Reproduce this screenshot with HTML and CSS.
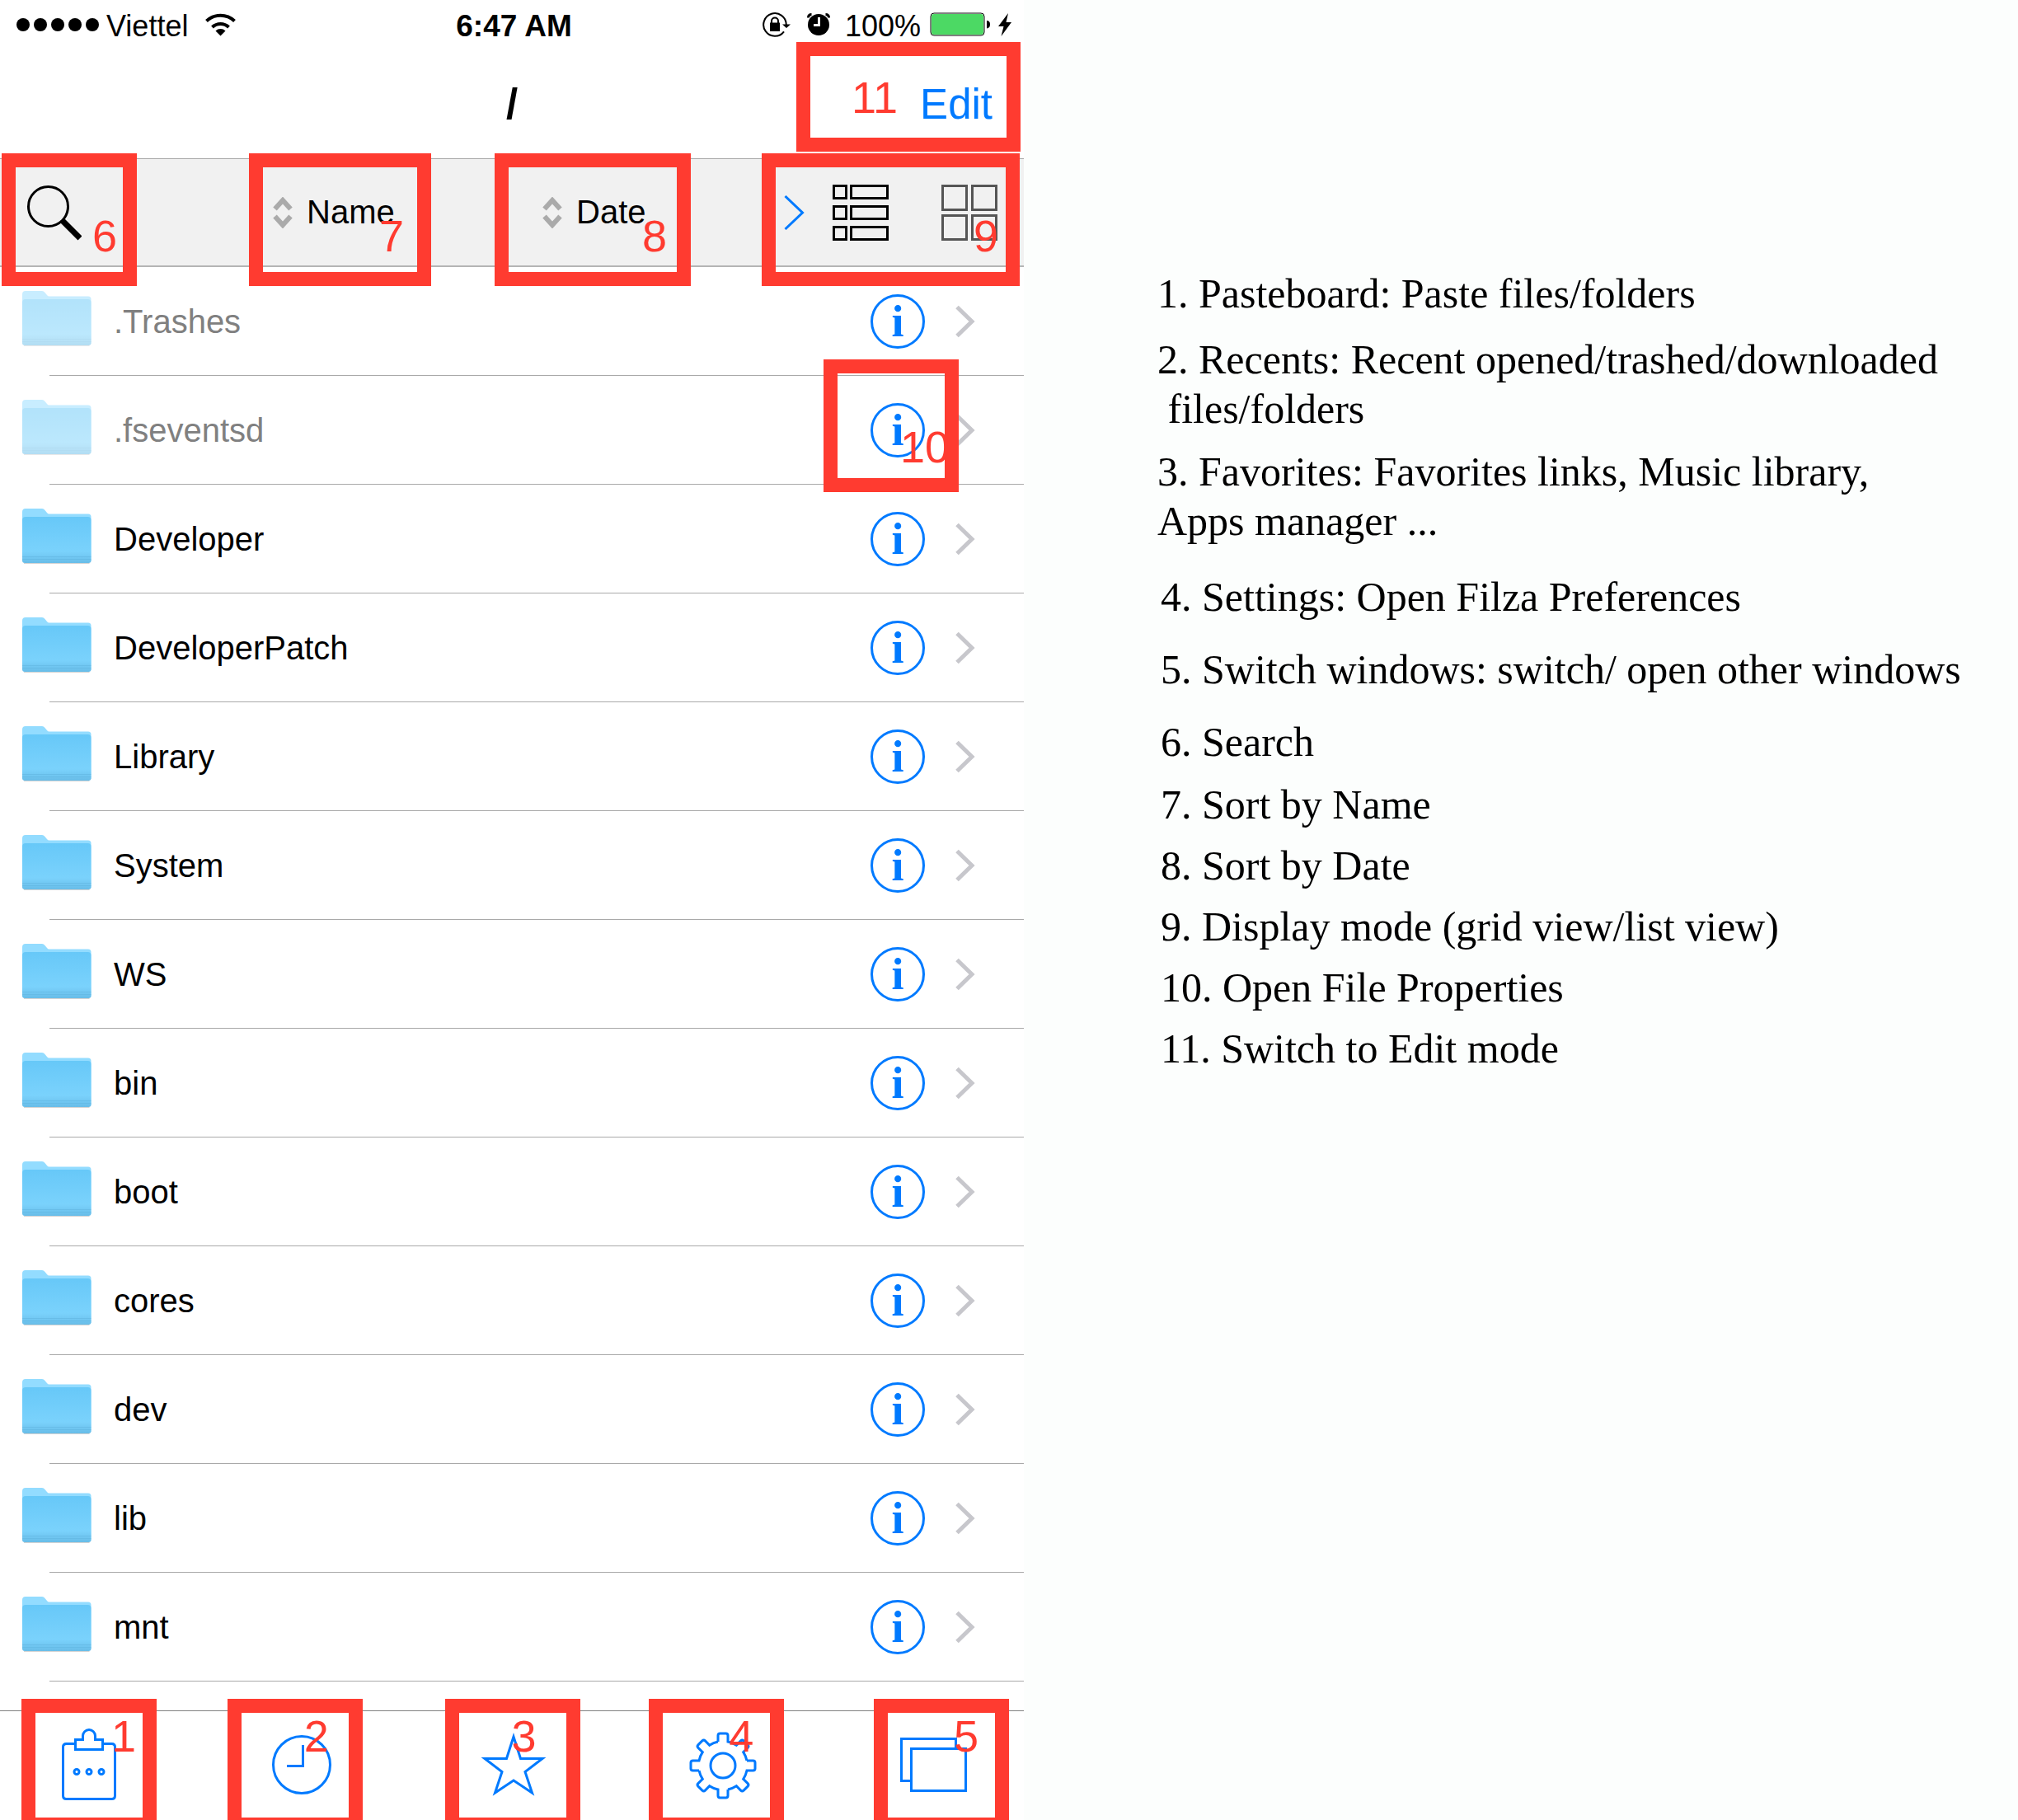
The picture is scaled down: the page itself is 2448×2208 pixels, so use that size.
FILE: index.html
```html
<!DOCTYPE html>
<html lang="en">
<head>
  <meta charset="UTF-8">
  <title>Filza - Guide</title>
  <meta name="viewport" content="width=device-width, initial-scale=1.0">
  <link rel="stylesheet" href="styles.css">
</head>
<body>
  <svg class="defs" aria-hidden="true">
    <defs>
      <linearGradient id="folder-fill" x1="0" y1="0" x2="0" y2="1">
        <stop offset="0" stop-color="#67c8f8"/>
        <stop offset="0.75" stop-color="#7ad2fc"/>
        <stop offset="1" stop-color="#68bde8"/>
      </linearGradient>
      <symbol id="folder" viewBox="0 0 84 74">
        <path d="M0 64V4q0-4 4-4h20q2 0 3.500 2l2.500 3q1 1.500 3 1.500h47q3.500 0 3.500 3.500v54z" fill="#93dcff"/>
        <path d="M0 14q0-4 4-4h75.500q4 0 4 4v49q0 3-3 3H3q-3 0-3-3z" fill="url(#folder-fill)"/>
        <path d="M0 58.500h83.500M0 61.500h83.500" stroke="#5fb4df" opacity="0.500"/>
        <path d="M2 66.500h79.500" stroke="#b5b5b5" opacity="0.600"/>
      </symbol>
      <symbol id="chevron" viewBox="0 0 26 40">
        <path d="M3 2.500 21 20 3 37.500" fill="none" stroke="#c7c7cc" stroke-width="5"/>
      </symbol>
      <symbol id="sort" viewBox="0 0 24 38">
        <path d="M2.500 14.500 12 4l9.500 10.500M2.500 23.500 12 34l9.500-10.500" fill="none" stroke="#aaa" stroke-width="6"/>
      </symbol>
      <path id="gear-quarter" d="M-6-29v-7.500q0-2.500 2.500-2.500h7q2.500 0 2.500 2.500V-29A30 30 0 0 1 16.300-24.700L21.600-30.100Q23.300-31.800 25.100-30.100L30.100-25.100Q31.800-23.300 30.100-21.600L24.700-16.300A30 30 0 0 1 29-6"/>
    </defs>
  </svg>

  <main class="page">
    <section class="phone">
      <div class="status">
        <div class="status-left">
          <svg width="100" height="18" viewBox="0 0 100 18">
            <circle cx="8" cy="9" r="8"/><circle cx="29" cy="9" r="8"/><circle cx="50" cy="9" r="8"/><circle cx="71" cy="9" r="8"/><circle cx="92" cy="9" r="8"/>
          </svg>
          <span class="carrier">Viettel</span>
          <svg width="38" height="28" viewBox="0 0 38 28">
            <path d="M1.500 9.500A24.700 24.700 0 0 1 35.500 9.500M8.500 17A14.500 14.500 0 0 1 28.500 17" fill="none" stroke="#000" stroke-width="4"/>
            <path d="M12.500 21.500a8.500 8.500 0 0 1 12 0l-6 6z"/>
          </svg>
        </div>
        <span class="time">6:47 AM</span>
        <div class="status-right">
          <svg class="lock" width="34" height="30" viewBox="0 0 34 30">
            <path d="M28.800 15A13.800 13.800 0 1 0 26 23.300" fill="none" stroke="#000" stroke-width="2"/>
            <path d="M24 14.500h10l-5 4.500zM9 12.500h12v10.500H9z"/>
            <path d="M11 13V10.500a4 4 0 0 1 8 0V13" fill="none" stroke="#000" stroke-width="2"/>
          </svg>
          <svg class="alarm" width="28" height="28" viewBox="0 0 28 28">
            <circle cx="14" cy="14" r="13"/>
            <path d="M1.500 5.500Q1.500 1.500 5.500 1.500M26.500 5.500Q26.500 1.500 22.500 1.500" fill="none" stroke="#000" stroke-width="3"/>
            <path d="M14.500 5v9.500H8" fill="none" stroke="#fff" stroke-width="3"/>
          </svg>
          <span class="percent">100%</span>
          <svg width="73" height="30" viewBox="0 0 73 30">
            <rect x="1" y="1" width="65" height="27" rx="4" fill="#fff" stroke="#000"/>
            <rect x="2" y="2" width="63" height="25" rx="3" fill="#4cd964"/>
            <path d="M69 10q4 0 4 4.500T69 19.500z"/>
          </svg>
          <svg class="bolt" width="16" height="28" viewBox="0 0 16 28">
            <path d="M12 0 0 16h6.500L3.500 28 16 11H9.500z"/>
          </svg>
        </div>
      </div>

      <header class="nav">
        <h1>/</h1>
        <button class="edit" type="button">Edit</button>
        <span class="mark mark-11">11</span>
      </header>

      <div class="toolbar">
        <div class="tool tool-search">
          <button type="button" aria-label="Search">
            <svg width="66" height="68" viewBox="0 0 66 68">
              <circle cx="25.500" cy="26.500" r="24" fill="none" stroke="#000" stroke-width="3"/>
              <path d="M42 43 64 65" stroke="#000" stroke-width="7"/>
            </svg>
          </button>
          <span class="mark mark-6">6</span>
        </div>
        <div class="tool">
          <button class="sort" type="button"><svg width="24" height="38"><use href="#sort"/></svg>Name</button>
          <span class="mark mark-7">7</span>
        </div>
        <div class="tool">
          <button class="sort" type="button"><svg width="24" height="38"><use href="#sort"/></svg>Date</button>
          <span class="mark mark-8">8</span>
        </div>
        <div class="tool tool-views">
          <svg width="25" height="42" viewBox="0 0 25 42">
            <path d="M1.500 1 22.500 21 1.500 41" fill="none" stroke="#007aff" stroke-width="3"/>
          </svg>
          <button class="view-list" type="button" aria-label="List view">
            <svg width="68" height="68" viewBox="0 0 68 68" fill="none" stroke="#000" stroke-width="3">
              <path d="M1.500 1.500h15v15h-15zM22.500 1.500h44v15h-44zM1.500 26.500h15v15h-15zM22.500 26.500h44v15h-44zM1.500 51.500h15v15h-15zM22.500 51.500h44v15h-44z"/>
            </svg>
          </button>
          <button class="view-grid" type="button" aria-label="Grid view">
            <svg width="68" height="68" viewBox="0 0 68 68" fill="none" stroke="#555" stroke-width="3">
              <path d="M1.500 1.500h29v29h-29zM37.500 1.500h29v29h-29zM1.500 37.500h29v29h-29zM37.500 37.500h29v29h-29z"/>
            </svg>
          </button>
          <span class="mark mark-9">9</span>
        </div>
      </div>

      <ul class="files">
        <li class="hidden-file"><svg class="folder"><use href="#folder"/></svg><span>.Trashes</span><button class="info" type="button">i</button><svg class="chevron"><use href="#chevron"/></svg></li>
        <li class="hidden-file"><svg class="folder"><use href="#folder"/></svg><span>.fseventsd</span><button class="info" type="button">i</button><svg class="chevron"><use href="#chevron"/></svg><span class="mark mark-10">10</span></li>
        <li><svg class="folder"><use href="#folder"/></svg><span>Developer</span><button class="info" type="button">i</button><svg class="chevron"><use href="#chevron"/></svg></li>
        <li><svg class="folder"><use href="#folder"/></svg><span>DeveloperPatch</span><button class="info" type="button">i</button><svg class="chevron"><use href="#chevron"/></svg></li>
        <li><svg class="folder"><use href="#folder"/></svg><span>Library</span><button class="info" type="button">i</button><svg class="chevron"><use href="#chevron"/></svg></li>
        <li><svg class="folder"><use href="#folder"/></svg><span>System</span><button class="info" type="button">i</button><svg class="chevron"><use href="#chevron"/></svg></li>
        <li><svg class="folder"><use href="#folder"/></svg><span>WS</span><button class="info" type="button">i</button><svg class="chevron"><use href="#chevron"/></svg></li>
        <li><svg class="folder"><use href="#folder"/></svg><span>bin</span><button class="info" type="button">i</button><svg class="chevron"><use href="#chevron"/></svg></li>
        <li><svg class="folder"><use href="#folder"/></svg><span>boot</span><button class="info" type="button">i</button><svg class="chevron"><use href="#chevron"/></svg></li>
        <li><svg class="folder"><use href="#folder"/></svg><span>cores</span><button class="info" type="button">i</button><svg class="chevron"><use href="#chevron"/></svg></li>
        <li><svg class="folder"><use href="#folder"/></svg><span>dev</span><button class="info" type="button">i</button><svg class="chevron"><use href="#chevron"/></svg></li>
        <li><svg class="folder"><use href="#folder"/></svg><span>lib</span><button class="info" type="button">i</button><svg class="chevron"><use href="#chevron"/></svg></li>
        <li><svg class="folder"><use href="#folder"/></svg><span>mnt</span><button class="info" type="button">i</button><svg class="chevron"><use href="#chevron"/></svg></li>
      </ul>

      <nav class="tabs">
        <div class="tab">
          <button type="button" aria-label="Pasteboard">
            <svg viewBox="0 0 84 90">
              <path d="M23.500 18.500H12.500q-4 0-4 4v59q0 4 4 4h55q4 0 4-4v-59q0-4-4-4H56.500"/>
              <path d="M23.500 13.500h9V9a7.500 7.500 0 0 1 15 0v4.500h9v12h-33z"/>
              <circle cx="25" cy="52.500" r="3"/><circle cx="40" cy="52.500" r="3"/><circle cx="55" cy="52.500" r="3"/>
            </svg>
          </button>
          <span class="mark mark-1">1</span>
        </div>
        <div class="tab">
          <button type="button" aria-label="Recents">
            <svg viewBox="0 0 84 90">
              <circle cx="42" cy="44" r="34.500"/>
              <path d="M43.500 20v25.500H24"/>
            </svg>
          </button>
          <span class="mark mark-2">2</span>
        </div>
        <div class="tab">
          <button type="button" aria-label="Favorites">
            <svg viewBox="0 0 84 90">
              <path stroke-miterlimit="10" d="M43 10 51.500 36.500H78L57 52.500 65.500 78 43 63 20.500 78 29 52.500 8 36.500H34.500z"/>
            </svg>
          </button>
          <span class="mark mark-3">3</span>
        </div>
        <div class="tab">
          <button type="button" aria-label="Settings">
            <svg viewBox="0 0 84 90">
              <g transform="translate(42 45)">
                <use href="#gear-quarter"/>
                <use href="#gear-quarter" transform="rotate(90)"/>
                <use href="#gear-quarter" transform="rotate(180)"/>
                <use href="#gear-quarter" transform="rotate(270)"/>
                <circle r="15"/>
              </g>
            </svg>
          </button>
          <span class="mark mark-4">4</span>
        </div>
        <div class="tab">
          <button type="button" aria-label="Switch windows">
            <svg viewBox="0 0 84 90">
              <path d="M13 63.500H2.500v-51h66V24M14.500 24.500h66v51h-66z"/>
            </svg>
          </button>
          <span class="mark mark-5">5</span>
        </div>
      </nav>
    </section>

    <section class="legend">
      <ol>
        <li>1. Pasteboard: Paste files/folders</li>
        <li class="gap-m">2. Recents: Recent opened/trashed/downloaded<br>&nbsp;files/folders</li>
        <li class="gap-s">3. Favorites: Favorites links, Music library,<br>Apps manager ...</li>
      </ol>
      <ol class="legend-more">
        <li>4. Settings: Open Filza Preferences</li>
        <li class="gap-l">5. Switch windows: switch/ open other windows</li>
        <li class="gap-l">6. Search</li>
        <li class="gap-s">7. Sort by Name</li>
        <li>8. Sort by Date</li>
        <li>9. Display mode (grid view/list view)</li>
        <li>10. Open File Properties</li>
        <li>11. Switch to Edit mode</li>
      </ol>
    </section>
  </main>
</body>
</html>
```
FILE: styles.css
```css
* { box-sizing: border-box; }
body { margin: 0; background: #fcfefd; color: #000; font-family: "Liberation Sans", Arial, sans-serif; }
h1, ul, ol { margin: 0; padding: 0; list-style: none; }
svg { display: block; flex: none; }
button { display: block; margin: 0; padding: 0; border: 0; background: none; color: inherit; font: inherit; cursor: pointer; }
.defs { position: absolute; width: 0; height: 0; }

.page { display: grid; grid-template-columns: 207fr 201fr; min-height: 100vh; }
.phone { display: flex; flex-direction: column; overflow: hidden; background: #fff; }

/* status bar */
.status { display: grid; grid-template-columns: 1fr auto 1fr; align-items: center; height: 60px; padding: 0 15px 0 20px; font-size: 36px; line-height: 56px; }
.status-left, .status-right { display: flex; align-items: center; }
.status-right { justify-content: flex-end; }
.carrier, .time, .percent { padding-top: 3px; }
.carrier { margin: 0 21px 0 9px; }
.time { font-size: 37px; font-weight: bold; }
.alarm { margin: 0 18px 0 20px; }
.percent { margin-right: 11px; }
.bolt { margin-left: 10px; }

/* title bar */
.nav { position: relative; display: grid; grid-template-columns: 1fr auto 1fr; align-items: center; height: 132px; padding: 0 38px; font-size: 51px; }
.nav h1 { grid-column: 2; font-size: 51px; }
.edit { justify-self: end; color: #007aff; }

/* sort / view toolbar */
.toolbar { display: grid; grid-template-columns: 331fr 327fr 293fr 291fr; height: 132px; border-top: 1px solid #a9a9a9; border-bottom: 2px solid #b4b4b4; background: #f1f1f1; font-size: 40px; }
.tool { position: relative; display: flex; align-items: center; }
.tool-search { padding-left: 33px; }
.sort { display: flex; align-items: center; gap: 17px; }
.view-list { margin: 0 64px 0 34px; }

/* file list */
.files { flex: 1; font-size: 40px; }
.files li { position: relative; display: flex; align-items: center; height: 132px; padding: 0 58px 0 27px; }
.files li::after { content: ""; position: absolute; left: 60px; right: 0; bottom: 0; height: 1px; background: #a9a9a9; }
.files li > span:not(.mark) { flex: 1; margin-left: 27px; }
.folder { width: 84px; height: 74px; }
.chevron { width: 26px; height: 40px; margin-left: 36px; }
.hidden-file .folder { opacity: 0.5; }
.hidden-file > span:not(.mark) { color: #808080; }
.info { width: 66px; height: 66px; border: 3px solid #007aff; border-radius: 50%; color: #007aff; font: bold 54px/60px "Liberation Serif", "Times New Roman", serif; text-align: center; }

/* bottom tabs */
.tabs { display: flex; justify-content: space-between; padding: 21px 67px 21px 68px; border-top: 1px solid #808080; }
.tab { position: relative; }
.tab svg { width: 84px; height: 90px; fill: none; stroke: #007aff; stroke-width: 3; }

/* numbered red frames */
.mark { position: absolute; z-index: 1; width: 164px; height: 161px; border: 17px solid #ff3b30; color: #ff3b30; font-size: 54px; line-height: 54px; pointer-events: none; }
.tab .mark { top: -36px; padding-top: 1px; }
.tool .mark { top: -7px; padding-top: 56px; }
.mark-1 { left: -42px; padding-left: 92px; }
.mark-2 { left: -48px; padding-left: 76px; }
.mark-3 { left: -40px; padding-left: 64px; }
.mark-4 { left: -48px; padding-left: 80px; }
.mark-5 { left: -31px; padding-left: 80px; }
.mark-6 { left: 2px; padding-left: 93px; }
.mark-7 { left: -29px; width: 221px; padding-left: 141px; }
.mark-8 { left: -58px; width: 238px; padding-left: 162px; }
.mark-9 { left: -27px; width: 313px; padding-left: 240px; }
.mark-10 { right: 79px; top: -20px; padding: 62px 0 0 76px; }
.mark-11 { right: 4px; top: -9px; width: 272px; height: 133px; padding: 23px 0 0 50px; }

/* legend */
.legend { padding: 326px 40px 0 162px; font: 50px/60px "Liberation Serif", "Times New Roman", serif; }
.legend li { margin-top: 14px; }
.legend li:first-child { margin-top: 0; }
.legend .gap-s { margin-top: 16px; }
.legend .gap-m { margin-top: 20px; }
.legend .gap-l { margin-top: 28px; }
.legend-more { margin: 32px 0 0 4px; }
```
